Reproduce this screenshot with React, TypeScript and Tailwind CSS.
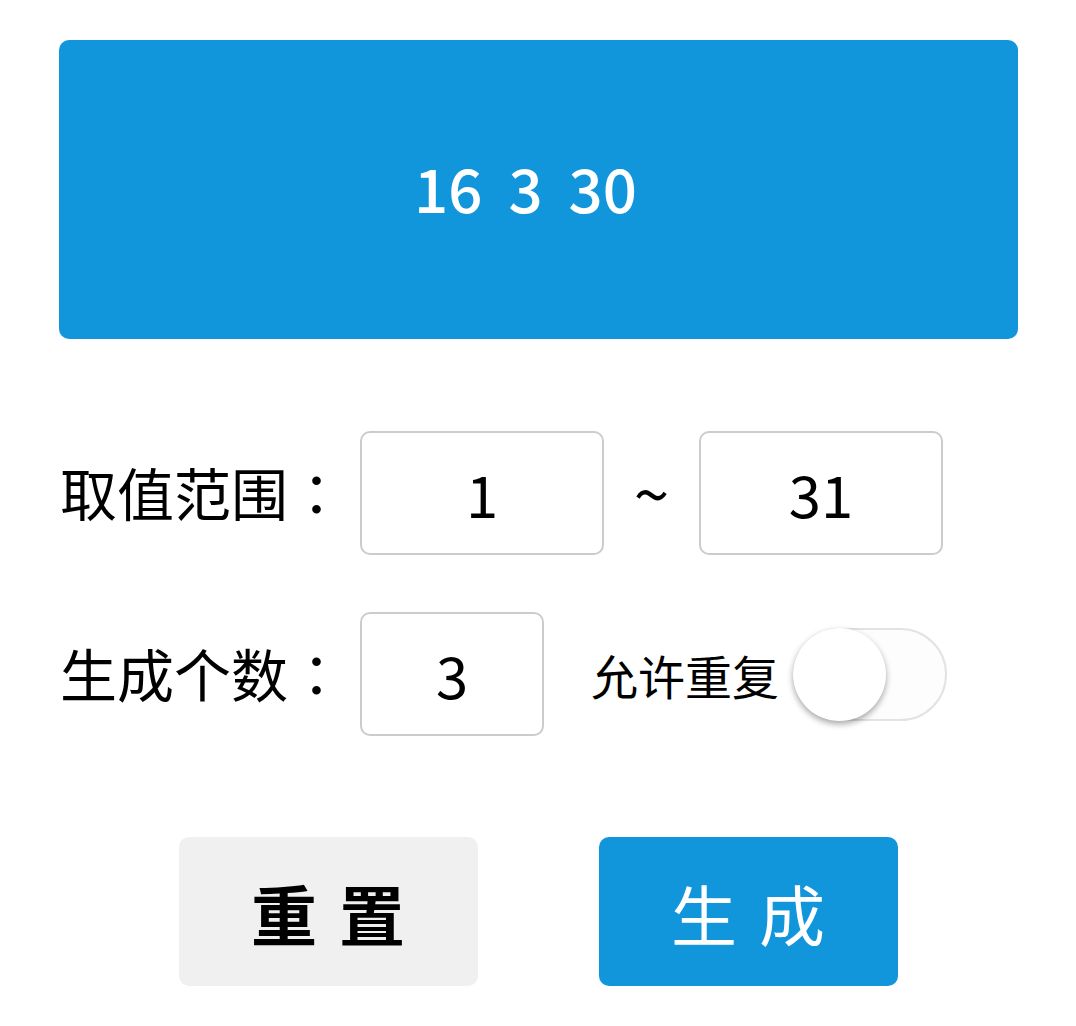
import React from "react";

const font = { fontFamily: '"Noto Sans CJK SC", "Noto Sans", sans-serif' };
const colonFont = { fontFamily: '"Noto Sans CJK TC", "Noto Sans CJK SC", sans-serif' };

export default function App() {
  return (
    <div className="w-[1076px] h-[1026px] bg-white text-black" style={font}>
      <div className="pt-[40px] pl-[59px]">
        <div className="w-[959px] h-[299px] rounded-[10px] bg-[#1296db] flex items-center justify-center gap-[26px] text-white text-[60px] font-medium leading-none pb-[6px] pr-[26px]">
          <span>16</span>
          <span>3</span>
          <span>30</span>
        </div>
      </div>

      <div className="mt-[92px] pl-[60px] flex items-center h-[124px]">
        <span className="text-[57px] leading-none w-[300px] whitespace-nowrap pb-[4px]">
          取值范围<span style={colonFont}>：</span>
        </span>
        <div className="w-[244px] h-[124px] rounded-[10px] border-2 border-[#cccccc] flex items-center justify-center text-[58px] leading-none">
          1
        </div>
        <div className="w-[95px] flex items-center justify-center text-[64px] leading-none pb-[4px]">~</div>
        <div className="w-[244px] h-[124px] rounded-[10px] border-2 border-[#cccccc] flex items-center justify-center text-[58px] leading-none">
          31
        </div>
      </div>

      <div className="mt-[57px] pl-[60px] flex items-center h-[124px]">
        <span className="text-[57px] leading-none w-[300px] whitespace-nowrap pb-[4px]">
          生成个数<span style={colonFont}>：</span>
        </span>
        <div className="w-[184px] h-[124px] rounded-[10px] border-2 border-[#cccccc] flex items-center justify-center text-[58px] leading-none">
          3
        </div>
        <span className="ml-[47px] text-[47px] leading-none">允许重复</span>
        <div className="ml-[14px] relative w-[154px] h-[93px] rounded-full border-2 border-[#e3e3e3] bg-[#fdfdfd]">
          <div className="absolute left-[-2px] top-[-2px] w-[93px] h-[93px] rounded-full bg-white shadow-[0_3px_6px_rgba(0,0,0,0.35)]" />
        </div>
      </div>

      <div className="mt-[101px] flex justify-center gap-[121px]">
        <div className="w-[299px] h-[149px] rounded-[10px] bg-[#f0f0f0] flex items-center justify-center text-[66px] font-bold leading-none tracking-[22px] pl-[22px]">
          重置
        </div>
        <div className="w-[299px] h-[149px] rounded-[10px] bg-[#1296db] flex items-center justify-center text-[66px] text-white leading-none tracking-[22px] pl-[22px]">
          生成
        </div>
      </div>
    </div>
  );
}
